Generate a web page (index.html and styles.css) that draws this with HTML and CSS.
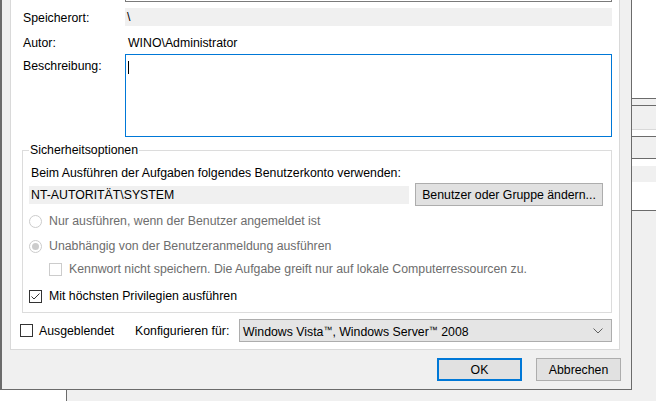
FILE: index.html
```html
<!DOCTYPE html>
<html lang="de">
<head>
<meta charset="UTF-8" />
<meta name="viewport" content="width=device-width, initial-scale=1.0" />
<title>Aufgabe erstellen</title>
<link rel="stylesheet" href="styles.css">
</head>
<body>
<div class="screen">
  <div class="dialog">
    <div class="page">
      <div class="name-field"></div>

      <div class="row row-location">
        <span class="label">Speicherort:</span>
        <div class="field readonly">\</div>
      </div>

      <div class="row row-author">
        <span class="label">Autor:</span>
        <div class="field plain">WINO\Administrator</div>
      </div>

      <div class="row row-desc">
        <span class="label">Beschreibung:</span>
        <div class="textarea"><span class="caret"></span></div>
      </div>

      <fieldset class="group">
        <legend>Sicherheitsoptionen</legend>
        <p class="hint">Beim Ausführen der Aufgaben folgendes Benutzerkonto verwenden:</p>
        <div class="account-row">
          <div class="field readonly account">NT-AUTORITÄT\SYSTEM</div>
          <button class="btn btn-wide">Benutzer oder Gruppe ändern...</button>
        </div>
        <div class="option disabled opt-first"><span class="radio"></span>Nur ausführen, wenn der Benutzer angemeldet ist</div>
        <div class="option disabled"><span class="radio checked"></span>Unabhängig von der Benutzeranmeldung ausführen</div>
        <div class="option disabled opt-password"><span class="check"></span>Kennwort nicht speichern. Die Aufgabe greift nur auf lokale Computerressourcen zu.</div>
        <div class="option opt-highest">
          <span class="check">
            <svg width="11" height="11" viewBox="0 0 11 11"><path d="M1.5 5.5 L4 8 L9.5 2.5" fill="none" stroke="#333" stroke-width="1"/></svg>
          </span>Mit höchsten Privilegien ausführen
        </div>
      </fieldset>

      <div class="config-row">
        <div class="option hidden-opt"><span class="check"></span>Ausgeblendet</div>
        <span class="config-label">Konfigurieren für:</span>
        <div class="combo">
          Windows Vista<span class="tm">™</span>, Windows Server<span class="tm">™</span> 2008
          <svg class="chevron" width="10" height="6" viewBox="0 0 10 6"><path d="M0.5 0.5 L5 5 L9.5 0.5" fill="none" stroke="#606060" stroke-width="1"/></svg>
        </div>
      </div>
    </div>

    <div class="buttons">
      <button class="btn btn-default">OK</button>
      <button class="btn">Abbrechen</button>
    </div>
  </div>

  <div class="behind">
    <div class="bh-white" style="height:98px"></div>
    <div class="bh-line"></div>
    <div class="bh-grey" style="height:6px"></div>
    <div class="bh-line"></div>
    <div class="bh-grey" style="height:23px"></div>
    <div class="bh-light"></div>
    <div class="bh-white" style="height:6px"></div>
    <div class="bh-line"></div>
    <div class="bh-grey" style="height:21px"></div>
    <div class="bh-line"></div>
    <div class="bh-white" style="height:7px"></div>
    <div class="bh-grey" style="height:16px"></div>
    <div class="bh-white" style="height:28px"></div>
    <div class="bh-line"></div>
  </div>

  <div class="below">
    <div class="below-white"></div>
  </div>
</div>
</body>
</html>
```

FILE: styles.css
```css
body {
margin: 0;
background: #f0f0f0;
font-family: 'Liberation Sans', Arial, sans-serif;
font-size: 12.3px;
color: #000;
}

.screen {
display: grid;
grid-template-columns: 632px 24px;
grid-template-rows: 390px 11px;
width: 656px;
height: 401px;
overflow: hidden;
}

/* dialog frame */
.dialog {
box-sizing: border-box;
border-left: 2px solid #6b6b6b;
border-right: 1px solid #6b6b6b;
border-bottom: 1px solid #6b6b6b;
background: #f0f0f0;
padding-left: 8px;
}

.page {
box-sizing: border-box;
width: 610px;
height: 350px;
background: #fff;
border: 1px solid #d9d9d9;
border-top: none;
padding: 0 7px 0 11px;
}

.name-field {
box-sizing: border-box;
margin-left: 103px;
width: 487px;
height: 2px;
border: 1px solid #7a7a7a;
border-top: none;
}

.row {
display: flex;
align-items: center;
}

.label {
box-sizing: border-box;
flex: none;
width: 103px;
padding-left: 1px;
line-height: 15px;
}

.field {
box-sizing: border-box;
height: 18px;
line-height: 18px;
white-space: nowrap;
}

.readonly {
background: #f0f0f0;
padding-left: 2px;
}

.row .field {
width: 487px;
}

.plain {
padding-left: 3px;
}

.row-location {
margin-top: 6px;
height: 18px;
}

.row-location .label {
padding-top: 2px;
}

.row-author {
margin-top: 8px;
height: 18px;
}

.row-desc {
margin-top: 2px;
align-items: flex-start;
}

.row-desc .label {
padding-top: 5px;
}

.textarea {
box-sizing: border-box;
width: 487px;
height: 83px;
border: 1px solid #0078d7;
}

.caret {
display: block;
width: 1px;
height: 13px;
margin: 6px 0 0 2px;
background: #000;
}

/* security group */
.group {
margin: 5px 0 0;
padding: 0 8px 6px 6px;
border: 1px solid #dcdcdc;
}

.group legend {
padding: 1px 1px 0;
line-height: 15px;
}

.hint {
margin: 8px 0 0;
padding-left: 2px;
line-height: 15px;
}

.account-row {
display: flex;
align-items: center;
gap: 6px;
margin-top: 2px;
}

.account {
width: 380px;
}

.btn {
box-sizing: border-box;
height: 23px;
width: 85px;
padding: 0;
background: #e1e1e1;
border: 1px solid #adadad;
font-family: inherit;
font-size: 12.3px;
color: #000;
}

.btn-wide {
width: 188px;
}

.btn-default {
border: 2px solid #0078d7;
}

.option {
display: flex;
align-items: center;
height: 20px;
margin-top: 5px;
white-space: nowrap;
}

.option.disabled {
color: #6d6d6d;
}

.opt-password {
margin-top: 3px;
padding-left: 20px;
}

.opt-highest {
margin-top: 7px;
}

.radio,
.check {
box-sizing: border-box;
flex: none;
width: 13px;
height: 13px;
margin-right: 7px;
background: #fff;
border: 1px solid #333;
display: flex;
align-items: center;
justify-content: center;
}

.radio {
border-radius: 50%;
}

.disabled .radio,
.disabled .check {
border-color: #cccccc;
}

.radio.checked::after {
content: "";
width: 7px;
height: 7px;
border-radius: 50%;
background: #cccccc;
}

/* bottom of the page */
.config-row {
display: flex;
align-items: center;
margin-top: 6px;
}

.hidden-opt {
width: 115px;
margin: 0 0 0 -2px;
}

.hidden-opt .check {
margin-right: 6px;
}

.combo {
box-sizing: border-box;
position: relative;
margin-left: auto;
width: 373px;
height: 23px;
line-height: 21px;
padding-left: 3px;
background: #e5e5e5;
border: 1px solid #adadad;
white-space: nowrap;
}

.tm {
font-size: 9px;
vertical-align: 3px;
}

.chevron {
position: absolute;
right: 8px;
top: 8px;
}

.buttons {
display: flex;
justify-content: flex-end;
gap: 14px;
padding: 8px 10px 0 0;
}

/* window behind the dialog */
.behind {
display: flex;
flex-direction: column;
background: #f0f0f0;
}

.bh-white {
background: #fff;
}

.bh-grey {
background: #f0f0f0;
}

.bh-line {
height: 1px;
background: #6b6b6b;
}

.bh-light {
height: 1px;
background: #d9d9d9;
}

.below {
grid-column: 1 / span 2;
display: flex;
}

.below-white {
width: 66px;
background: #fff;
border-right: 1px solid #6b6b6b;
}
```
